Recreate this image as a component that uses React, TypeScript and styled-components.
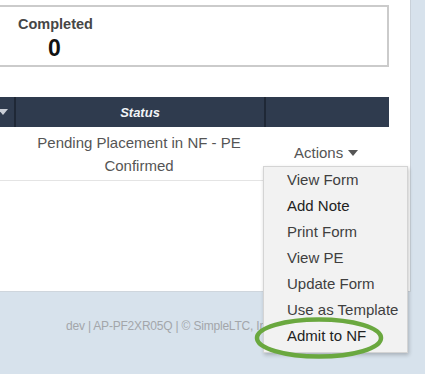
import React from "react";
import styled, { createGlobalStyle } from "styled-components";

const Global = createGlobalStyle`
  html, body { margin: 0; padding: 0; }
  body {
    background: #d7e2ec;
    font-family: "Liberation Sans", Arial, sans-serif;
    width: 425px;
    height: 374px;
    overflow: hidden;
  }
`;

const Page = styled.div`
  position: relative;
  width: 425px;
  height: 374px;
  display: flex;
  flex-direction: column;
`;

const Panel = styled.div`
  width: 411px;
  height: 292px;
  background: #ffffff;
  border-right: 1px solid #c9d1d9;
  border-bottom: 1px solid #cfd6dd;
  box-sizing: border-box;
  padding-top: 5px;
  overflow: hidden;
`;

const Card = styled.div`
  margin-left: -12px;
  width: 401px;
  height: 62px;
  box-sizing: border-box;
  border: 2px solid #cbcbcb;
  background: #fff;
  padding: 8px 0 0 28px;
  display: flex;
  flex-direction: column;
  align-items: flex-start;
`;

const CardTitle = styled.div`
  font-weight: bold;
  font-size: 14.5px;
  color: #464646;
  line-height: 18px;
`;

const CardValue = styled.div`
  font-weight: bold;
  font-size: 23px;
  color: #111;
  line-height: 26px;
  margin-top: 2px;
  margin-left: 30px;
`;

const Table = styled.div`
  margin-top: 30px;
  margin-left: -12px;
  width: 401px;
`;

const HeadRow = styled.div`
  display: grid;
  grid-template-columns: 26px 250px 125px;
  height: 30px;
  background: #2f3b4e;
`;

const HeadCell = styled.div<{ $sep?: boolean }>`
  display: flex;
  align-items: center;
  justify-content: center;
  color: #f2f4f7;
  font-style: italic;
  font-weight: bold;
  font-size: 13px;
  border-left: ${(p) => (p.$sep ? "2px solid #1f2836" : "none")};
  box-sizing: border-box;
`;

const BodyRow = styled.div`
  display: grid;
  grid-template-columns: 26px 250px 125px;
  height: 53px;
  border-bottom: 1px solid #e4e4e4;
`;

const StatusCell = styled.div`
  display: flex;
  flex-direction: column;
  align-items: center;
  padding-top: 4px;
  font-size: 15px;
  line-height: 23px;
  color: #555;
`;

const ActionCell = styled.div`
  display: flex;
  align-items: center;
  padding-left: 30px;
  padding-bottom: 2px;
  font-size: 15px;
  color: #555;
  gap: 5px;
`;

const Footer = styled.div`
  height: 81px;
  padding-top: 27px;
  box-sizing: border-box;
  padding-left: 66px;
  font-size: 12px;
  letter-spacing: -0.2px;
  color: #a3a6aa;
  white-space: nowrap;
`;

const Menu = styled.div`
  position: absolute;
  left: 263px;
  top: 166px;
  width: 145px;
  height: 187px;
  box-sizing: border-box;
  background: #f2f2f2;
  border: 1px solid #d4d4d4;
  box-shadow: 1px 2px 4px rgba(0, 0, 0, 0.22);
  display: flex;
  flex-direction: column;
`;

const MenuItem = styled.div<{ $dark?: boolean }>`
  height: 26px;
  line-height: 26px;
  padding-left: 23px;
  font-size: 15px;
  color: ${(p) => (p.$dark ? "#222" : "#3f3f3f")};
  white-space: nowrap;
`;

const Ring = styled.svg`
  position: absolute;
  left: 251px;
  top: 314px;
`;

const Caret = () => (
  <svg width="10" height="6" viewBox="0 0 10 6">
    <path d="M0 0 L10 0 L5 6 Z" fill="#555" />
  </svg>
);

export default function App() {
  const items: [string, boolean][] = [
    ["View Form", false],
    ["Add Note", true],
    ["Print Form", false],
    ["View PE", false],
    ["Update Form", false],
    ["Use as Template", false],
    ["Admit to NF", true],
  ];
  return (
    <Page>
      <Global />
      <Panel>
        <Card>
          <CardTitle>Completed</CardTitle>
          <CardValue>0</CardValue>
        </Card>
        <Table>
          <HeadRow>
            <HeadCell>
              <svg width="10" height="6" viewBox="0 0 10 6" style={{ marginLeft: 4 }}>
                <path d="M0 0 L10 0 L5 6 Z" fill="#c9ced6" />
              </svg>
            </HeadCell>
            <HeadCell $sep>Status</HeadCell>
            <HeadCell $sep />
          </HeadRow>
          <BodyRow>
            <div />
            <StatusCell>
              <span>Pending Placement in NF - PE</span>
              <span>Confirmed</span>
            </StatusCell>
            <ActionCell>
              Actions <Caret />
            </ActionCell>
          </BodyRow>
        </Table>
      </Panel>
      <Footer>dev | AP-PF2XR05Q | © SimpleLTC, Inc</Footer>
      <Menu>
        {items.map(([label, dark]) => (
          <MenuItem key={label} $dark={dark}>
            {label}
          </MenuItem>
        ))}
      </Menu>
      <Ring width="140" height="48" viewBox="0 0 140 48">
        <ellipse cx="68" cy="24" rx="62" ry="18.5" fill="none" stroke="#6aa83f" strokeWidth="4.5" />
      </Ring>
    </Page>
  );
}
